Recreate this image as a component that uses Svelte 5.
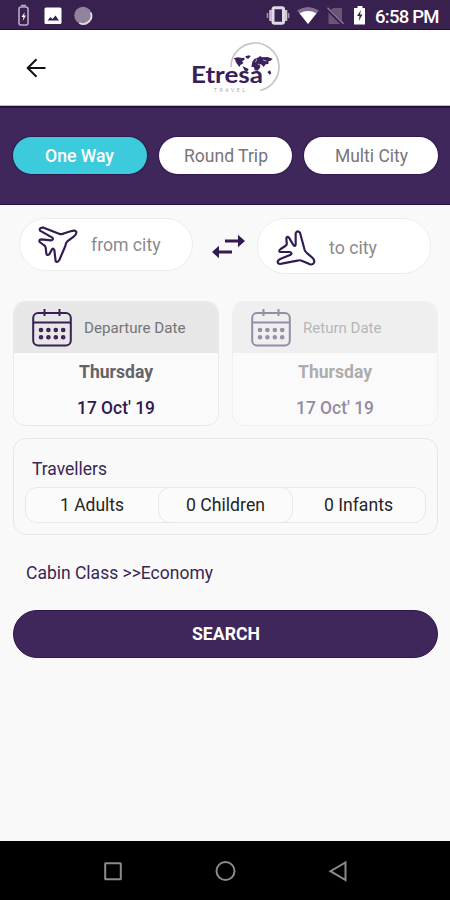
<script>
  const tabs = ['One Way', 'Round Trip', 'Multi City'];
  const dates = [
    { label: 'Departure Date', off: false, w: 101.5 },
    { label: 'Return Date', off: true, w: 78.5 }
  ];
  const dots = [0, 1, 2, 3];
</script>

{#snippet fit(text, w, size, weight, color)}
  <svg class="fit" width={w} height="24" aria-label={text}>
    <text x="0" y="17.8" textLength={w} lengthAdjust="spacingAndGlyphs" font-size={size} font-weight={weight} fill={color} font-family="Roboto, sans-serif">{text}</text>
  </svg>
{/snippet}

<div class="screen">
  <div class="status">
    <svg class="sys" width="450" height="30" viewBox="0 0 450 30">
      <rect x="19" y="7" width="9" height="18" rx="2" fill="none" stroke="#b9a9cc" stroke-width="1.6" />
      <path d="M21 5.5h5" stroke="#b9a9cc" stroke-width="1.5" />
      <path d="M24.8 12l-3.3 5h2l-.8 4 3.3-5.5h-2z" fill="#fff" />
      <rect x="44.5" y="7.5" width="17" height="16.5" rx="1.5" fill="#fff" />
      <path d="M47.5 20.5l3-3.5 2 2 3-3.5 3.5 5z" fill="#38214f" />
      <circle cx="83" cy="15.5" r="8.7" fill="#8f849c" />
      <path d="M90.8 12.5a8.3 8.3 0 0 1-11.5 10.5" fill="none" stroke="#e4dfe9" stroke-width="1.8" />
      <rect x="273" y="7.7" width="10.500" height="15.500" rx="1.5" fill="none" stroke="#e0dae6" stroke-width="3" />
      <path d="M270.500 10v11M286 10v11" stroke="#cfc6d8" stroke-width="2.5" />
      <path d="M267.500 13v5M288.500 13v5" stroke="#9f91af" stroke-width="1.6" />
      <path d="M297 10.5q11-7 22 0L308 24z" fill="#806f91" />
      <path d="M299.5 13.2q8.500-4.500 17 0L308 24z" fill="#fff" />
      <path d="M333 8h9v16h-13.500V12z" fill="#695678" />
      <path d="M327 8.500l16 16" stroke="#38214f" stroke-width="3.500" />
      <path d="M327.500 7.800l16 16" stroke="#8d7d9c" stroke-width="1.500" />
      <path d="M357.500 6h5v2h2.500v16.500h-11V8h3.500z" fill="#fff" />
      <path d="M361 10l-4 6h2.500l-.700 5 3.700-6.500H360z" fill="#38214f" />
      <text x="375" y="22.500" textLength="64.500" font-family="Roboto" font-size="18.500" font-weight="500" fill="#fff">6:58 PM</text>
    </svg>
  </div>

  <header>
    <svg class="back" width="22" height="22" viewBox="0 0 22 22" fill="none" stroke="#111" stroke-width="2">
      <path d="M20.500 11H3M11.500 2.200L2.700 11l8.800 8.800" />
    </svg>
    <svg class="logo" width="110" height="70" viewBox="0 0 330 210">
      <path d="M153 96A72 72 0 1 1 240 166.400" fill="none" stroke="#c6c5cb" stroke-width="5" />
      <g fill="#3b225c">
        <path d="M161 70l12-3 13 2 8-1-1 7-7 4 5 5-9 5-4 7-5-7-6-9-1-6z" />
        <path d="M196 64l12-3 4 3-7 7-6-1z" />
        <path d="M188 94l10 4 8 4-5 9-8-5z" />
        <path d="M217 80l6-8 10-4 8-5 5 4 16-1 16 5-6 6-6 1-1 9-8 1-6 8-6-7-5-2 1 10-8 10-9-1-2-9-8-2z" />
        <path d="M262 111l8-5 4 9-5 4z" />
      </g>
      <path d="M231 72l-5 10M249 75l10 3M233 87l7 3" stroke="#c9bdd8" stroke-width="2.500" />
      <text x="33" y="145" textLength="216" lengthAdjust="spacingAndGlyphs" font-family="Lato" font-weight="700" font-size="66" fill="#36205a">Etresa</text>
      <text x="102" y="172" textLength="93" font-family="Open Sans" font-size="16" fill="#a3a2a8">TRAVEL</text>
    </svg>
  </header>

  <nav>
    {#each tabs as tab, i}
      <button class:active={i === 0}>
        {@render fit(tab, [69, 84, 73][i], 17.8, i === 0 ? 500 : 400, i === 0 ? '#fff' : '#77757a')}
      </button>
    {/each}
  </nav>

  <main>
    <div class="route">
      <div class="city from">
        <svg width="42" height="40" viewBox="112 355 126 120">
          <path d="M121 375Q117 365 132 366L178 384Q186 387 194 383L213 377Q228 372 230 379Q231 386 222 393L202 408Q198 412 197 421L179 463Q173 472 168 467L164 433Q161 426 157 431L149 446Q141 451 140 443L138 426Q137 420 132 418L120 409Q117 401 126 401L153 404Q163 403 158 396z" />
        </svg>
        {@render fit('from city', 69.5, 18, 400, '#8b8a8d')}
      </div>
      <svg class="swap" width="34" height="28" viewBox="0 0 34 28" fill="#321b50">
        <path d="M14 6.500h13V1.700L34 8l-7 6.300V9.500H14z" />
        <path d="M21 17.500H8v-4.800L1 19l7 6.300v-4.800h13z" />
      </svg>
      <div class="city to">
        <svg width="42" height="40" viewBox="151 366 126 120">
          <path d="M213 382Q218 371 226 380L240 432Q242 438 248 442L264 456Q271 463 268 470Q264 477 256 475L233 465Q226 461 218 464L171 473Q158 475 159 467Q161 461 172 457L198 446Q204 441 195 438L167 438Q160 435 168 429L182 420Q188 416 186 410L185 397Q187 389 193 395L206 417Q212 424 213 415z" />
        </svg>
        {@render fit('to city', 48, 18, 400, '#8b8a8d')}
      </div>
    </div>

    <div class="dates">
      {#each dates as d}
        <section class="date" class:off={d.off}>
          <div class="date-head">
            <svg width="40" height="38" viewBox="0 0 40 38" fill="none" stroke="#382057" stroke-width="2">
              <rect x="1.200" y="4" width="37.600" height="32.500" rx="5" />
              <path d="M1.200 13.500h37.600M12.500 0v7M27.500 0v7" />
              {#each dots as n}
                <circle cx={9 + n * 7.4} cy="21" r="1.300" />
                <circle cx={9 + n * 7.4} cy="28.300" r="1.300" />
              {/each}
            </svg>
            {@render fit(d.label, d.w, 15.3, 400, '#747376')}
          </div>
          <div class="day">{@render fit('Thursday', 74, 17.8, 700, '#646365')}</div>
          <div class="num">{@render fit("17 Oct' 19", 78, 17.8, 500, '#311950')}</div>
        </section>
      {/each}
    </div>

    <section class="travellers">
      <h2>{@render fit('Travellers', 75, 17.8, 400, '#392653')}</h2>
      <div class="counts">
        <div>{@render fit('1 Adults', 64, 18, 400, '#252427')}</div>
        <div class="mid">{@render fit('0 Children', 79, 18, 400, '#252427')}</div>
        <div>{@render fit('0 Infants', 69, 18, 400, '#252427')}</div>
      </div>
    </section>

    <p class="cabin">{@render fit('Cabin Class >>Economy', 187, 17.8, 400, '#392653')}</p>
    <button class="search">{@render fit('SEARCH', 68, 17.8, 700, '#fff')}</button>
  </main>

  <footer>
    <svg width="450" height="59" viewBox="0 0 450 59" fill="none" stroke="#8b8b8b" stroke-width="2">
      <rect x="105.200" y="22.200" width="15.600" height="16" rx=".5" />
      <circle cx="225.500" cy="30" r="9" />
      <path d="M345.500 21.500v17.500l-15-8.800z" />
    </svg>
  </footer>
</div>

<style>
  :global(body) { margin: 0; }
  .screen { width: 450px; height: 900px; display: flex; flex-direction: column; background: #f9f9f9; font-family: Roboto, sans-serif; overflow: hidden; }
  .screen * { box-sizing: border-box; }
  svg { display: block; flex: none; }
  .fit { overflow: visible; }
  button { border: 0; padding: 0; display: flex; align-items: center; justify-content: center; }
  .status { height: 30px; flex: none; background: #38214f; border-bottom: 1px solid #21113a; }
  header { height: 76px; flex: none; display: flex; background: #fff; border-bottom: 1px solid #b9b8c0; }
  .back { margin: 27px 0 0 25px; }
  .logo { margin: 5px 0 0 133px; }
  nav { height: 99px; flex: none; display: flex; gap: 12px; padding: 29px 12px 0 13px; background: #3f265b; border-top: 2px solid #27103f; border-bottom: 1px solid #2c0d4c; }
  nav button { flex: 1; height: 37px; border-radius: 19px; background: #fff; box-shadow: 0 0 1px 1px #32194e; }
  nav .active { background: #3bcbdc; }
  main { flex: 1; min-height: 0; padding: 13px 12px 0 13px; }
  .route { display: flex; padding: 0 6px; }
  .city { display: flex; background: #fff; border: 1px solid #ececec; }
  .city path { fill: none; stroke: #321b50; stroke-width: 6.5; stroke-linejoin: round; }
  .from { width: 174px; height: 53px; border-radius: 27px; padding: 5px 0 0 17px; gap: 12px; }
  .from .fit { margin-top: 9px; }
  .to { width: 174px; height: 56px; border-radius: 28px; padding: 9px 0 0 17px; gap: 12px; }
  .to .fit { margin-top: 8px; }
  .swap { margin: 15px 12px 0 18px; }
  .dates { display: flex; gap: 13px; margin-top: 27px; }
  .date { flex: 1; height: 125px; border: 1px solid #e9e9e9; border-radius: 12px; overflow: hidden; background: #fbfbfb; }
  .off { opacity: .5; }
  .date-head { height: 51px; display: flex; align-items: center; background: #e7e7e7; padding-left: 18px; gap: 12px; }
  .date-head .fit { margin-top: -2px; }
  .day, .num { display: flex; justify-content: center; }
  .day { padding-top: 7px; }
  .num { padding-top: 12px; }
  .travellers { height: 97px; margin-top: 12px; border: 1px solid #e7e7e7; border-radius: 13px; padding: 18px 11px 0; }
  h2 { margin: 0 0 6px 7px; font-size: 17px; line-height: 24px; }
  .counts { height: 36px; display: flex; border: 1px solid #e8e8e8; border-radius: 12px; background: #fbfbfb; }
  .counts div { flex: 1; display: flex; align-items: center; justify-content: center; }
  .counts .mid { margin: -1px 0; border: 1px solid #e8e8e8; border-radius: 12px; }
  .cabin { margin: 26px 0 0 13px; }
  .search { width: 425px; height: 48px; margin-top: 25px; border-radius: 24px; background: #3f265b; border: 1px solid #321451; }
  footer { height: 59px; flex: none; background: #000; }
</style>
